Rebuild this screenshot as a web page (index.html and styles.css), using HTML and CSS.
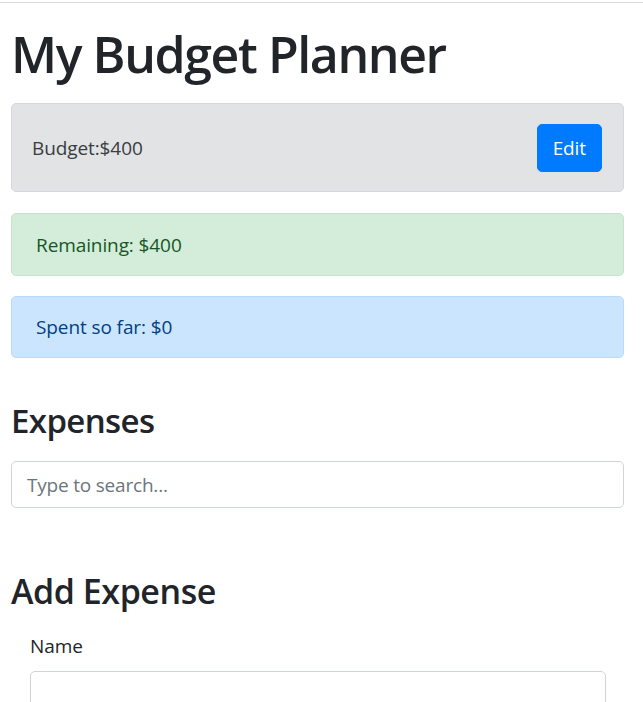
FILE: index.html
```html
<!DOCTYPE html>
<html lang="en">
<head>
<meta charset="utf-8">
<title>My Budget Planner</title>
<link rel="stylesheet" href="styles.css">
</head>
<body>
<div class="topline"></div>
<div class="container">
  <h1 class="title">My Budget Planner</h1>
  <div class="budget-box">
    <span class="budget-text">Budget:$400</span>
    <button class="btn-edit" type="button">Edit</button>
  </div>
  <div class="alert alert-success">Remaining: $400</div>
  <div class="alert alert-primary">Spent so far: $0</div>
  <h3 class="section-title expenses-title">Expenses</h3>
  <input class="form-control" type="text" placeholder="Type to search...">
  <h3 class="section-title add-title">Add Expense</h3>
  <form class="add-form">
    <label class="form-label" for="name">Name</label>
    <input class="form-control" id="name" type="text">
  </form>
</div>
</body>
</html>
```
FILE: styles.css
```css
* { box-sizing: border-box; }
body {
  margin: 0;
  font-family: "Open Sans", "Noto Sans", sans-serif;
  font-size: 19px;
  line-height: 30px;
  color: #212529;
  background: #fff;
  letter-spacing: -0.1px;
}
.topline {
  height: 1px;
  margin-top: 2px;
  background: #d9d9d9;
}
.container {
  padding: 0 19px 0 11px;
}
.title {
  margin: 0;
  padding-top: 21px;
  font-size: 50px;
  line-height: 61px;
  font-weight: 600;
  letter-spacing: -1.4px;
}
.budget-box {
  margin-top: 18px;
  display: flex;
  align-items: center;
  justify-content: space-between;
  padding: 19.5px 21px 19.5px 20px;
  background: #e2e3e5;
  border: 1px solid #d6d8db;
  border-radius: 5px;
  color: #383d41;
}
.budget-text { padding-top: 1px; }
.btn-edit {
  height: 48px;
  padding: 0 15px;
  font-family: inherit;
  font-size: 19px;
  line-height: 30px;
  letter-spacing: -0.1px;
  color: #fff;
  background: #007bff;
  border: 1px solid #007bff;
  border-radius: 5px;
}
.alert {
  margin-top: 21px;
  padding: 15.5px 24px 15px;
  border: 1px solid transparent;
  border-radius: 5px;
}
.alert-primary { margin-top: 20px; }
.alert-success {
  background: #d4edda;
  border-color: #c3e6cb;
  color: #155724;
}
.alert-primary {
  background: #cce5ff;
  border-color: #b8daff;
  color: #004085;
}
.section-title {
  margin: 0;
  font-size: 33px;
  line-height: 40px;
  font-weight: 600;
  letter-spacing: -0.6px;
}
.expenses-title { margin-top: 43px; margin-bottom: 20px; }
.add-title { margin-top: 63px; margin-bottom: 20px; font-size: 34px; letter-spacing: -0.45px; }
.form-control {
  display: block;
  width: 100%;
  height: 47px;
  padding: 7.5px 15px;
  font-family: inherit;
  font-size: 19px;
  line-height: 30px;
  letter-spacing: -0.2px;
  color: #495057;
  background: #fff;
  border: 1px solid #ced4da;
  border-radius: 5px;
}
.form-control::placeholder { color: #6c757d; opacity: 1; }
.add-form {
  padding: 0 18px 0 19px;
}
.form-label {
  display: block;
  margin-bottom: 9.5px;
}
```
